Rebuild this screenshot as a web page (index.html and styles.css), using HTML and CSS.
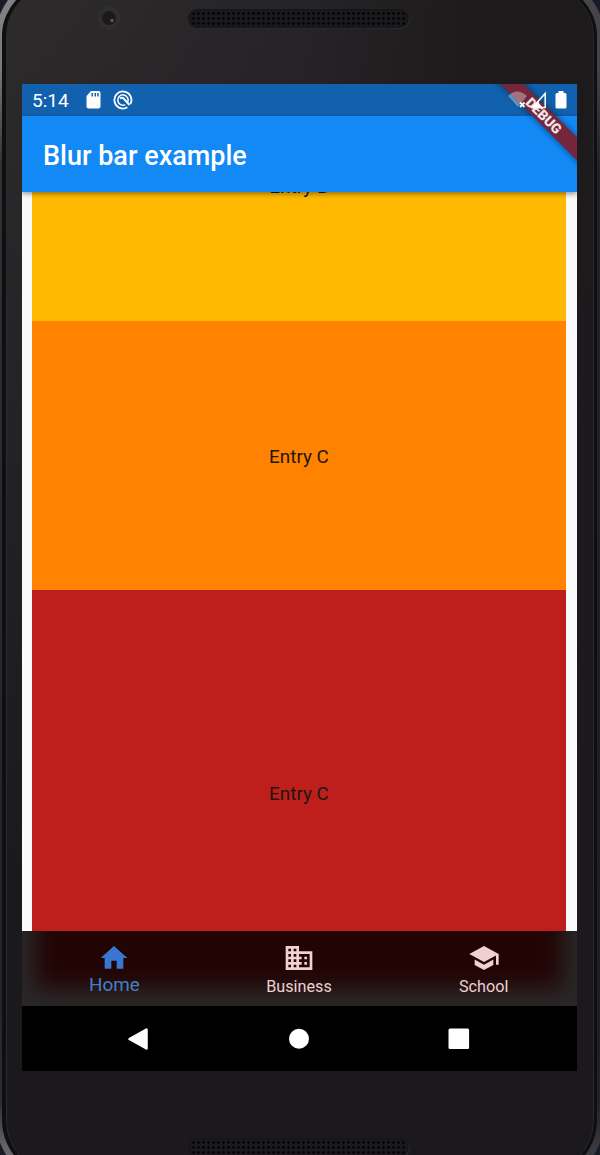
FILE: index.html
```html
<!DOCTYPE html>
<html lang="en">
<head>
<meta charset="utf-8">
<title>Blur bar example</title>
<link rel="stylesheet" href="styles.css">
</head>
<body>
<div class="viewport">
  <div class="phone">
    <div class="bezel-top">
      <svg class="camera" viewBox="0 0 24 24"><circle cx="12" cy="12" r="11.5" fill="#2f2e2f"/><circle cx="12" cy="12" r="7" fill="#1b191c"/><circle cx="15" cy="14.5" r="1.7" fill="#68535d"/></svg>
      <div class="speaker"></div>
    </div>
    <div class="screen">
      <header class="status">
        <span class="clock">5:14</span>
        <svg class="sd" viewBox="0 0 15 18"><path fill="#fff" fill-rule="evenodd" d="M5 0H12.5Q14.5 0 14.5 2V15.5Q14.5 17.5 12.5 17.5H2.5Q.5 17.5 .5 15.5V5ZM5.5 2V5.5H7V2ZM8.5 2V5.5H10V2ZM11.2 2V5.5H12.7V2Z"/></svg>
        <svg class="sync" viewBox="0 0 20 20" fill="none" stroke="#fff"><path d="M14.4 17.2A8.500 8.500 0 1 1 17.400 14" stroke-width="1.800"/><path d="M12.300 14.700A5.200 5.200 0 1 1 14.700 12.200" stroke-width="1.500"/><path d="M7 8.500Q9.500 6.800 11.200 9.200L16.500 15" stroke-width="2"/></svg>
        <svg class="battery" viewBox="0 0 12 18"><path fill="#fff" d="M3.5 0H8.5V2H10Q11.5 2 11.5 3.5V16Q11.5 17.5 10 17.5H2Q.5 17.5 .5 16V3.5Q.5 2 2 2H3.5Z"/></svg>
      </header>
      <div class="appbar"><h1>Blur bar example</h1></div>
      <svg class="debug" viewBox="0 0 96 96">
        <defs><filter id="soft" x="-20%" y="-100%" width="140%" height="300%"><feGaussianBlur stdDeviation="3.5"/></filter></defs>
        <g transform="translate(96 0) rotate(45)">
          <rect x="-70" y="37.8" width="140" height="16.2" fill="#000" opacity=".5" filter="url(#soft)"/>
          <rect x="-70" y="37.8" width="140" height="16.2" fill="#74263b"/>
          <text class="debug-text" x="-1" y="50.8" text-anchor="middle">DEBUG</text>
        </g>
        <path fill="#fff" fill-opacity=".35" d="M27 12Q36 3 46 12L37 23Z"/>
        <path stroke="#fff" stroke-width="1.8" d="M39 18.5L43.5 23M43.5 18.5L39 23"/>
        <path fill="none" stroke="#fff" stroke-width="1.5" d="M64.2 9.5V23.5H51.5Z"/>
        <path fill="#fff" d="M50 24.2L57.8 16V19L62 24.2Z"/>
      </svg>
      <main class="list">
        <div class="entry amber">Entry B</div>
        <div class="entry orange">Entry C</div>
        <div class="entry red">Entry C</div>
      </main>
      <nav class="tabs">
        <div class="tab active">
          <svg class="tab-icon" viewBox="0 0 24 24"><path d="M10 20v-6h4v6h5v-8h3L12 3 2 12h3v8z"/></svg>
          <span>Home</span>
        </div>
        <div class="tab">
          <svg class="tab-icon" viewBox="0 0 24 24"><path d="M12 7V3H2v18h20V7H12zM6 19H4v-2h2v2zm0-4H4v-2h2v2zm0-4H4V9h2v2zm0-4H4V5h2v2zm4 12H8v-2h2v2zm0-4H8v-2h2v2zm0-4H8V9h2v2zm0-4H8V5h2v2zm10 12h-8v-2h2v-2h-2v-2h2v-2h-2V9h8v10zm-2-8h-2v2h2v-2zm0 4h-2v2h2v-2z"/></svg>
          <span>Business</span>
        </div>
        <div class="tab">
          <svg class="tab-icon" viewBox="0 0 24 24"><path d="M5 13.18v4L12 21l7-3.82v-4L12 17l-7-3.82zM12 3L1 9l11 6 9-4.91V17h2V9L12 3z"/></svg>
          <span>School</span>
        </div>
      </nav>
      <footer class="system">
        <svg viewBox="0 0 24 24"><path d="M20.5 2.500V21.500L3.500 12Z" fill="#fff" stroke="#fff" stroke-width="2.500" stroke-linejoin="round"/></svg>
        <svg viewBox="0 0 24 24"><circle cx="12" cy="11.700" r="10" fill="#fff"/></svg>
        <svg viewBox="0 0 24 24"><rect x="1.500" y="1.500" width="20.600" height="20.600" rx="1.500" fill="#fff"/></svg>
      </footer>
    </div>
    <div class="bezel-bottom"><div class="speaker lower"></div></div>
  </div>
</div>
</body>
</html>
```
FILE: styles.css
```css
* { box-sizing: border-box; }
body {
  margin: 0;
  font-family: Roboto, "Noto Sans", sans-serif;
}
.viewport {
  position: relative;
  height: 1155px;
  overflow: hidden;
  background: #191c26;
}
/* metal rim around the handset */
.viewport::before {
  content: "";
  position: absolute;
  inset: -24px -4px -30px -4px;
  border-radius: 60px 60px 65px 65px;
  background: linear-gradient(90deg, transparent 50%, rgba(28, 26, 30, .6) 100%), linear-gradient(180deg, #858287 0, #7d7b80 90px, #302f32 190px, #242326 80%, #2c2b2e 93%, #67656a 97%);
}
.phone {
  position: relative;
  width: 595px;
  height: 1195px;
  margin: -17px 0 0 2px;
  padding: 17px 0 0 16px;
  border: 3px solid #0f0e10;
  border-left-width: 4px;
  border-radius: 53px 53px 58px 58px;
  background: linear-gradient(180deg, transparent 0, #1b191c 75%), linear-gradient(90deg, #2e2b2d 0, #262426 50%, #1c1a1b 80%);
  box-shadow: inset 1px 0 #2c2b2d, inset -1px 0 #2a292b;
}
.bezel-top {
  height: 81px;
  padding-left: 75px;
  display: flex;
  align-items: flex-start;
}
.camera { width: 24px; height: 24px; margin-top: 3px; }
.speaker {
  width: 221px;
  height: 19px;
  margin: 6px 0 0 67px;
  border: 2px solid #171619;
  border-radius: 10px;
  background: radial-gradient(circle, #050506 1.1px, transparent 1.6px) 1px 0 / 5px 5px #1b191c;
  box-shadow: 1px 1px #2b292d;
}
.screen {
  position: relative;
  width: 555px;
  height: 987px;
  overflow: hidden;
  background: #fafafa;
  display: flex;
  flex-direction: column;
}
.status {
  height: 32px;
  flex: none;
  background: #1161ae;
  display: flex;
  align-items: center;
  padding: 0 10px;
  color: #fff;
  z-index: 2;
}
.clock { font-size: 19px; width: 43px; line-height: 32px; padding-top: 2px; }
.sd { width: 15px; height: 18px; margin-left: 11px; }
.sync { width: 20px; height: 20px; margin-left: 12px; }
.battery { width: 12px; height: 18px; margin-left: auto; }
.appbar {
  height: 76px;
  flex: none;
  background: #1389f6;
  padding-left: 21px;
  display: flex;
  align-items: center;
  box-shadow: 0 2px 5px rgba(0, 0, 0, .4);
  z-index: 2;
}
h1 {
  margin: 4px 0 0;
  color: #fff;
  font-size: 27px;
  font-weight: 500;
  line-height: 32px;
}
.debug {
  position: absolute;
  right: 0;
  top: 0;
  width: 96px;
  height: 96px;
  z-index: 3;
}
.debug-text { fill: #f4e4e7; font-size: 13.8px; font-weight: 900; }
.list {
  flex: 1;
  min-height: 0;
  padding: 0 11px 0 10px;
  display: flex;
  flex-direction: column;
  justify-content: flex-end;
  margin-bottom: -65px;
}
.entry {
  flex: none;
  height: 269px;
  display: flex;
  align-items: center;
  justify-content: center;
  font-size: 18.9px;
  padding-top: 2px;
  color: #221610;
}
.amber { background: #ffb900; padding-top: 0; }
.orange { background: #ff8300; }
.red { background: #be1f1c; height: 406px; padding-top: 0; }
.tabs {
  flex: none;
  height: 75px;
  position: relative;
  z-index: 2;
  display: grid;
  grid-template-columns: repeat(3, 1fr);
  padding-right: 1px;
  background: #292728;
  overflow: hidden;
}
/* softened continuation of the list below the bar */
.tabs::before {
  content: "";
  position: absolute;
  z-index: -1;
  inset: -40px 14px 18px 14px;
  background: #220404;
  filter: blur(11px);
}
.tab {
  display: flex;
  flex-direction: column;
  align-items: center;
  padding-top: 11px;
  color: #f0d0d0;
  font-size: 16.2px;
  line-height: 20px;
}
.tab-icon { width: 32px; height: 32px; fill: currentColor; }
.tab span { margin-top: 3px; }
.tab.active { color: #3976cf; font-size: 18.9px; }
.tab.active span { margin-top: 1px; color: #4180c8; }
.system {
  flex: none;
  height: 65px;
  background: #000;
  z-index: 2;
  display: flex;
  align-items: center;
  justify-content: space-between;
  padding: 0 106px 0 104px;
}
.system svg { width: 24px; height: 24px; }
.bezel-bottom { padding-left: 99px; }
.lower { margin-top: 67px; }
```
